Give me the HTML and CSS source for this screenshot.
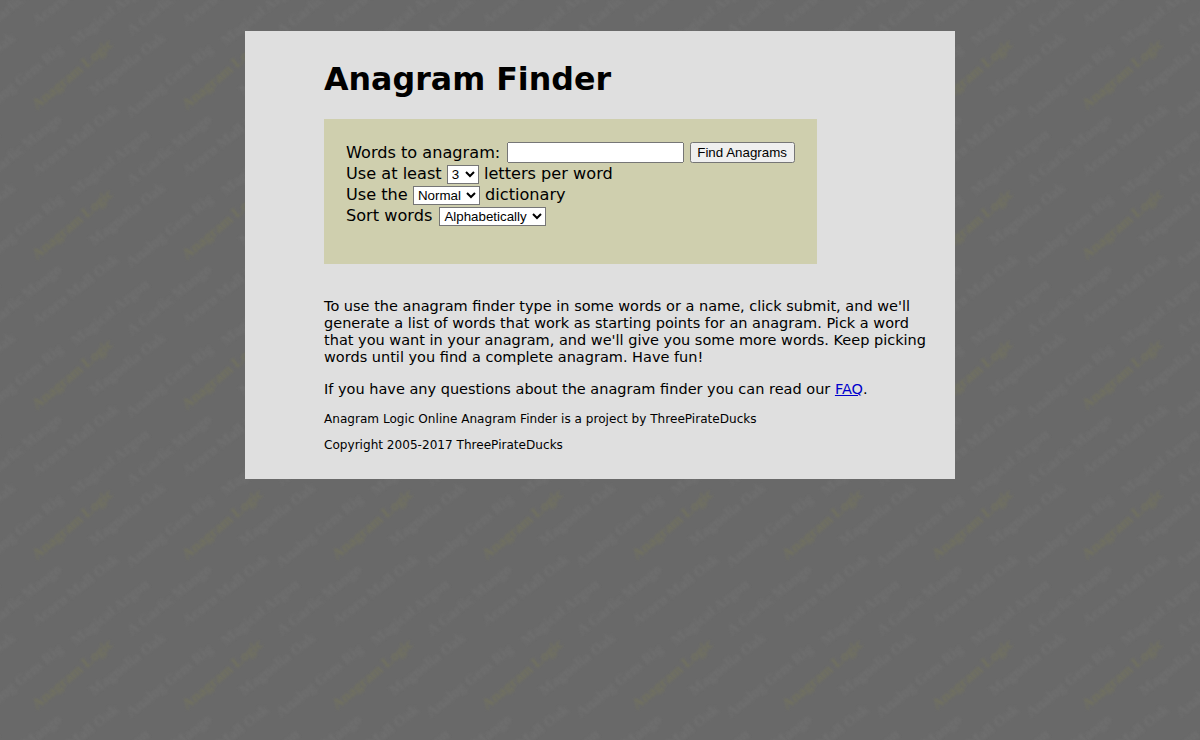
FILE: index.html
```html
<!DOCTYPE html>
<html lang="en">
<head>
<meta charset="utf-8">
<title>Anagram Finder</title>
<link rel="stylesheet" href="styles.css">
</head>
<body>
<main class="page">
  <h1 class="title">Anagram Finder</h1>
  <form class="finder">
    <div class="row"><label for="words">Words to anagram:</label> <input id="words" class="words" type="text"> <button class="submit" type="button">Find Anagrams</button></div>
    <div class="row">Use at least <select class="pick"><option>3</option></select> letters per word</div>
    <div class="row">Use the <select class="pick"><option>Normal</option></select> dictionary</div>
    <div class="row">Sort words <select class="pick sort"><option>Alphabetically</option></select></div>
  </form>
  <p class="intro">To use the anagram finder type in some words or a name, click submit, and we'll generate a list of words that work as starting points for an anagram. Pick a word that you want in your anagram, and we'll give you some more words. Keep picking words until you find a complete anagram. Have fun!</p>
  <p class="intro last">If you have any questions about the anagram finder you can read our <a class="link" href="#faq">FAQ</a>.</p>
  <p class="small">Anagram Logic Online Anagram Finder is a project by ThreePirateDucks</p>
  <p class="small">Copyright 2005-2017 ThreePirateDucks</p>
</main>
</body>
</html>
```
FILE: styles.css
```css
html, body { margin: 0; height: 100%; }
body {
  font-family: "DejaVu Sans", Verdana, sans-serif;
  color: #000;
  background-color: #696969;
  background-image: url("data:image/svg+xml,%3Csvg xmlns='http://www.w3.org/2000/svg' xmlns:xlink='http://www.w3.org/1999/xlink' width='150' height='150'%3E%3Cdefs%3E%3Cfilter id='b' x='-5%25' y='-5%25' width='110%25' height='110%25'%3E%3CfeGaussianBlur stdDeviation='0.8'/%3E%3C/filter%3E%3Cg id='t' font-family='Liberation Serif' font-weight='bold' font-size='15' fill='%23707070'%3E%3Ctext transform='translate(37 110) rotate(-40)' fill='%2372725e'%3EAnagram Logic%3C/text%3E%3Ctext transform='translate(94 96) rotate(-38)'%3EMagnolia Oak%3C/text%3E%3Ctext transform='translate(131 118) rotate(-39)'%3EAnalog Gem Rig%3C/text%3E%3Ctext transform='translate(37 26) rotate(-38)'%3EAcorn Mall Oak%3C/text%3E%3Ctext transform='translate(76 46) rotate(-39)'%3EMagical Argon%3C/text%3E%3Ctext transform='translate(132 36) rotate(-39)'%3EA Garlic Mango%3C/text%3E%3C/g%3E%3C/defs%3E%3Cg filter='url(%23b)'%3E%3Cuse xlink:href='%23t'/%3E%3Cuse xlink:href='%23t' x='-150'/%3E%3Cuse xlink:href='%23t' y='150'/%3E%3Cuse xlink:href='%23t' x='-150' y='150'/%3E%3C/g%3E%3C/svg%3E");
  background-size: 150px 150px;
  padding-top: 31px;
  box-sizing: border-box;
}
.page {
  width: 710px;
  height: 448px;
  box-sizing: border-box;
  margin: 0 auto;
  padding: 31px 28px 0 79px;
  background: #dfdfdf;
}
.title {
  margin: 0 0 23px;
  font-size: 31.7px;
  line-height: 34px;
  font-weight: bold;
}
.finder {
  width: 493px;
  height: 145px;
  box-sizing: border-box;
  padding: 23px 22px 0;
  margin-bottom: 34px;
  background: #cfcfae;
  font-size: 16.15px;
  line-height: 21px;
}
.row { height: 21px; white-space: nowrap; }
.words { width: 177px; height: 21px; margin-left: 2px; vertical-align: 1px; box-sizing: border-box; font: 13.33px "Liberation Sans", Arial, sans-serif; }
.submit { width: 105px; height: 21px; padding: 1px 2px; vertical-align: 1px; box-sizing: border-box; font: 13.33px "Liberation Sans", Arial, sans-serif; }
.pick { font: 13.33px "Liberation Sans", Arial, sans-serif; background: #fff; padding-right: 2px; }
.sort { margin-left: 2px; }
.intro { margin: 0 0 15px; font-size: 14.5px; line-height: 17px; }
.intro.last { margin-bottom: 13px; }
.link { color: #00c; }
.small { margin: 0 0 10px; font-size: 12.08px; line-height: 16px; }
```
